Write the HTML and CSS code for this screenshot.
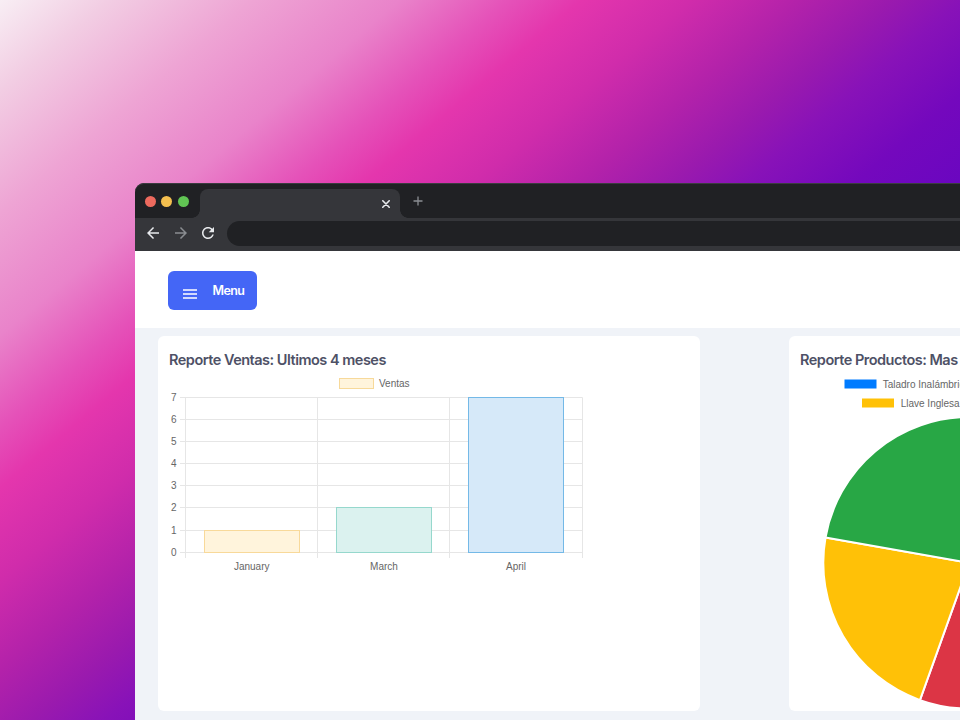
FILE: index.html
```html
<!DOCTYPE html>
<html lang="es">
<head>
<meta charset="utf-8">
<title>Reportes</title>
<link rel="stylesheet" href="styles.css">
</head>
<body>
<div class="window">
  <div class="tabstrip">
    <div class="lights">
      <span class="light light-red"></span>
      <span class="light light-yellow"></span>
      <span class="light light-green"></span>
    </div>
    <div class="tab">
      <svg class="tab-close" width="8" height="8" viewBox="0 0 8 8"><path d="M0.8 0.8L7.2 7.2M7.2 0.8L0.8 7.2" stroke="#e8eaed" stroke-width="1.6" stroke-linecap="round"/></svg>
    </div>
    <svg class="newtab" width="10" height="10" viewBox="0 0 10 10"><path d="M5 0.5V9.5M0.5 5H9.5" stroke="#8b8e93" stroke-width="1.3"/></svg>
  </div>
  <div class="toolbar">
    <svg class="nav-icon nav-back" width="18" height="18" viewBox="0 0 24 24"><path fill="#e8eaed" d="M20 11H7.83l5.59-5.59L12 4l-8 8 8 8 1.41-1.41L7.83 13H20v-2z"/></svg>
    <svg class="nav-icon nav-forward" width="18" height="18" viewBox="0 0 24 24"><path fill="#8a8d91" d="M4 11h12.17l-5.59-5.59L12 4l8 8-8 8-1.41-1.41L16.17 13H4v-2z"/></svg>
    <svg class="nav-icon nav-reload" width="18" height="18" viewBox="0 0 24 24"><path fill="#e8eaed" d="M17.65 6.35C16.2 4.9 14.21 4 12 4c-4.42 0-7.99 3.58-7.99 8s3.57 8 7.99 8c3.730 0 6.84-2.55 7.73-6h-2.08c-.82 2.33-3.04 4-5.65 4-3.31 0-6-2.690-6-6s2.69-6 6-6c1.66 0 3.14.69 4.22 1.78L13 11h7V4l-2.35 2.35z"/></svg>
    <div class="omnibox"></div>
  </div>
  <div class="page">
    <header class="topbar">
      <button class="menu-btn" type="button">
        <svg class="menu-icon" width="14" height="10" viewBox="0 0 14 10"><path d="M0 1H14M0 5H14M0 9H14" stroke="#ffffff" stroke-width="1.5"/></svg>
        <span class="menu-label">Menu</span>
      </button>
    </header>
    <main class="content">
      <section class="card">
        <h2 class="card-title">Reporte Ventas: Ultimos 4 meses</h2>
        <svg class="chart" width="430" height="204" viewBox="0 0 430 204">
          <g class="legend">
            <rect x="171.5" y="6.5" width="34" height="10" fill="#fff4dc" stroke="#f7d99a"/>
            <text x="211" y="14.6" class="chart-text">Ventas</text>
          </g>
          <g class="grid" stroke="#e6e6e6" stroke-width="1">
            <path d="M12 25.5H414.5M12 47.5H414.5M12 69.5H414.5M12 91.5H414.5M12 113.5H414.5M12 135.5H414.5M12 158.5H414.5M12 180.5H414.5"/>
            <path d="M17.5 25.5V186M149.5 25.5V186M281.5 25.5V186M414.5 25.5V186"/>
          </g>
          <g class="chart-text" text-anchor="end">
            <text x="8.5" y="29">7</text>
            <text x="8.5" y="51">6</text>
            <text x="8.5" y="73">5</text>
            <text x="8.5" y="95">4</text>
            <text x="8.5" y="117">3</text>
            <text x="8.5" y="139">2</text>
            <text x="8.5" y="162">1</text>
            <text x="8.5" y="184">0</text>
          </g>
          <rect x="36.5" y="158.5" width="95" height="22" fill="#fff4dc" stroke="#f8d99a"/>
          <rect x="168.5" y="135.5" width="95" height="45" fill="#dbf2ef" stroke="#96d8cd"/>
          <rect x="300.5" y="25.5" width="95" height="155" fill="#d6e9f9" stroke="#74b9e7"/>
          <g class="chart-text" text-anchor="middle">
            <text x="83.7" y="198.3">January</text>
            <text x="216" y="198.3">March</text>
            <text x="348" y="198.3">April</text>
          </g>
        </svg>
      </section>
      <section class="card">
        <h2 class="card-title">Reporte Productos: Mas Vendidos</h2>
        <svg class="chart" width="430" height="338" viewBox="0 0 430 338">
          <g class="legend chart-text">
            <rect x="45.5" y="7.5" width="32" height="9" fill="#007bff"/>
            <text x="83.7" y="15.5">Taladro Inalámbrico</text>
            <rect x="184.5" y="7.5" width="32" height="9" fill="#dc3545"/>
            <text x="222.5" y="15.5">Martillo</text>
            <rect x="63" y="26.5" width="32" height="9" fill="#ffc107"/>
            <text x="101.7" y="34.5">Llave Inglesa</text>
            <rect x="172" y="26.5" width="32" height="9" fill="#28a745"/>
            <text x="210" y="34.5">Destornillador</text>
          </g>
          <g class="pie" stroke="#ffffff" stroke-width="2" stroke-linejoin="round">
            <path fill="#007bff" d="M170.1 190.8 L170.1 45 A145.8 145.8 0 0 1 307.1 240.7 Z"/>
            <path fill="#dc3545" d="M170.1 190.8 L307.1 240.7 A145.8 145.8 0 0 1 120.95 328.07 Z"/>
            <path fill="#ffc107" d="M170.1 190.8 L120.95 328.07 A145.8 145.8 0 0 1 26.52 165.48 Z"/>
            <path fill="#28a745" d="M170.1 190.8 L26.52 165.48 A145.8 145.8 0 0 1 170.1 45 Z"/>
          </g>
        </svg>
      </section>
    </main>
  </div>
</div>
</body>
</html>
```

FILE: styles.css
```css
html, body {
  margin: 0;
  height: 100%;
  overflow: hidden;
}

body {
  box-sizing: border-box;
  padding: 183px 0 0 135px;
  font-family: Inter, "Noto Sans", sans-serif;
  background: linear-gradient(140deg,
    #f8eef4 0%,
    #f2cde3 6%,
    #eea4d4 14%,
    #e983ca 22%,
    #e552b9 28%,
    #e436ad 32%,
    #d02cab 38%,
    #b322aa 44%,
    #9a1aae 49%,
    #8812b8 53%,
    #7408bd 59%,
    #6a06c0 65%,
    #5c04b8 80%,
    #5004b0 100%);
}

.window {
  width: 1300px;
  height: 537px;
  border-radius: 9px 0 0 0;
  overflow: hidden;
  background: #202124;
  display: flex;
  flex-direction: column;
  box-shadow: inset 0 1px 0 #3b3c40;
}

/* ---------- tab strip ---------- */
.tabstrip {
  height: 35px;
  flex: none;
  display: flex;
  align-items: flex-end;
  padding-left: 9.5px;
}

.lights {
  align-self: center;
  display: flex;
  gap: 5.7px;
  margin-top: 1px;
}

.light {
  width: 11px;
  height: 11px;
  border-radius: 50%;
}

.light-red { background: #ed6a5e; }
.light-yellow { background: #f4bf4f; }
.light-green { background: #61c554; }

.tab {
  position: relative;
  margin-left: 11px;
  width: 200px;
  height: 29px;
  background: #35363a;
  border-radius: 8px 8px 0 0;
  display: flex;
  align-items: center;
  justify-content: flex-end;
  padding-right: 9.5px;
  box-sizing: border-box;
}

.tab::before,
.tab::after {
  content: "";
  position: absolute;
  bottom: 0;
  width: 8px;
  height: 8px;
}

.tab::before {
  left: -8px;
  background: radial-gradient(circle at 0 0, transparent 7.5px, #35363a 8px);
}

.tab::after {
  right: -8px;
  background: radial-gradient(circle at 100% 0, transparent 7.5px, #35363a 8px);
}

.tab-close {
  display: block;
  margin-top: 1px;
}

.newtab {
  align-self: center;
  margin-left: 13px;
  margin-top: 1px;
}

/* ---------- toolbar ---------- */
.toolbar {
  height: 33px;
  flex: none;
  box-sizing: border-box;
  padding: 3px 0 5px 9px;
  background: #35363a;
  display: flex;
  align-items: center;
}

.nav-icon {
  display: block;
  flex: none;
  margin-top: -1px;
}

.nav-forward { margin-left: 10.3px; }
.nav-reload { margin-left: 8.7px; }

.omnibox {
  margin-left: 10.5px;
  flex: 1;
  height: 25px;
  border-radius: 13px;
  background: #202124;
}

/* ---------- page ---------- */
.page {
  flex: 1;
  background: #f0f3f8;
}

.topbar {
  height: 77px;
  box-sizing: border-box;
  padding: 20px 33px 0;
  background: #ffffff;
}

.menu-btn {
  height: 39px;
  display: inline-flex;
  align-items: center;
  padding: 0 13px 0 15px;
  border: 0;
  border-radius: 6px;
  background: #4466f6;
  color: #ffffff;
  font-family: Inter, "Noto Sans", sans-serif;
  cursor: pointer;
}

.menu-icon {
  display: block;
  margin-top: 6px;
  margin-right: 15.5px;
}

.menu-label {
  font-size: 12.5px;
  font-weight: 600;
  letter-spacing: -0.6px;
  line-height: 16px;
}

.content {
  display: flex;
  gap: 89px;
  padding: 8px 0 0 23px;
}

.card {
  flex: none;
  width: 542px;
  height: 375px;
  box-sizing: border-box;
  padding: 14px 10px 0;
  background: #ffffff;
  border-radius: 6px;
}

.card-title {
  margin: 0 0 2px 1px;
  font-size: 14.5px;
  line-height: 20px;
  font-weight: 600;
  letter-spacing: -0.5px;
  color: #4e5166;
  white-space: nowrap;
}

.chart {
  display: block;
  overflow: visible;
}

.chart-text {
  font-family: "Liberation Sans", Arial, sans-serif;
  font-size: 10px;
  fill: #666666;
}
```
